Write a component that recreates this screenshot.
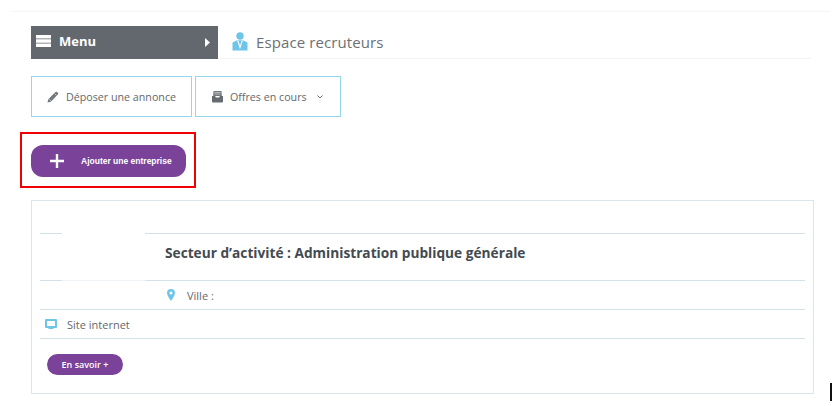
<div class="page">
  <div class="topline"></div>
  <header class="head">
    <div class="menu">
      <svg class="burger" width="15" height="12" viewBox="0 0 15 12"><path d="M0 0h15v3.400H0zM0 4.300h15v3.400H0zM0 8.600h15V12H0z" fill="#fff"/></svg>
      <span class="menu-label">Menu</span>
      <svg class="arrow" width="5" height="9" viewBox="0 0 5 9"><path d="M0 0l5 4.500L0 9z" fill="#fff"/></svg>
    </div>
    <svg class="person" width="16" height="19" viewBox="0 0 16 19">
      <circle cx="8" cy="4" r="3.700" fill="#6fc5e8"/>
      <path d="M0.500 10.500L5 8.300H11L15.500 10.500V18.500H0.500z" fill="#6fc5e8"/>
      <path d="M5.700 8.500L8 15.500L10.300 8.500" fill="none" stroke="#fff" stroke-width="1.100"/>
    </svg>
    <span class="title">Espace recruteurs</span>
  </header>

  <nav class="actions">
    <div class="act first">
      <svg width="12" height="12" viewBox="0 0 12 12"><path d="M0.500 11.500l0.800-3.300L8.400 1.100a1.200 1.200 0 0 1 1.700 0l0.800 0.800a1.200 1.200 0 0 1 0 1.700L3.800 10.700z" fill="#73787c"/><path d="M2.200 8.200l1.600 1.600M7.700 2.600l1.700 1.700" stroke="#fff" stroke-width="0.600"/></svg>
      <span>Déposer une annonce</span>
    </div>
    <div class="act second">
      <svg width="11" height="12" viewBox="0 0 11 12"><path d="M1.500 0h8l0.300 5H1.200z" fill="#73787c"/><path d="M2.500 1.500h6M2.500 3h6" stroke="#d0d3d5" stroke-width="0.700"/><path d="M0 5h3l1 1.500h3L8 5h3v5.500a1 1 0 0 1-1 1H1a1 1 0 0 1-1-1z" fill="#666b70"/></svg>
      <span>Offres en cours</span>
      <svg class="chev" width="6" height="4" viewBox="0 0 6 4"><path d="M0.500 0.500L3 3L5.500 0.500" fill="none" stroke="#666b70" stroke-width="1"/></svg>
    </div>
  </nav>

  <div class="redbox">
    <div class="add">
      <svg width="14" height="14" viewBox="0 0 14 14"><path d="M5.800 0h2.400v5.800H14v2.400H8.200V14H5.800V8.200H0V5.800h5.800z" fill="#fff"/></svg>
      <span>Ajouter une entreprise</span>
    </div>
  </div>

  <section class="card">
    <div class="rule"><i class="logo-gap"></i></div>
    <div class="sector-row"><h2>Secteur d’activité : Administration publique générale</h2></div>
    <div class="rule"><i class="logo-gap faint"></i></div>
    <div class="row ville">
      <svg width="8" height="12" viewBox="0 0 8 12"><path fill-rule="evenodd" d="M4 0a4 4 0 0 1 4 4c0 2.600-4 8-4 8S0 6.600 0 4a4 4 0 0 1 4-4zm0 2.500a1.500 1.500 0 1 0 0 3 1.500 1.500 0 0 0 0-3z" fill="#6fc5e8"/></svg>
      <span>Ville :</span>
    </div>
    <div class="rule"></div>
    <div class="row site">
      <svg width="12" height="11" viewBox="0 0 12 11"><path fill-rule="evenodd" d="M1 0h10a1 1 0 0 1 1 1v7a1 1 0 0 1-1 1H8.500v1H3.500V9H1a1 1 0 0 1-1-1V1a1 1 0 0 1 1-1zm1 2v5h8V2z" fill="#6fc5e8"/></svg>
      <span>Site internet</span>
    </div>
    <div class="rule"></div>
    <div class="more">En savoir +</div>
  </section>

  <div class="cursor"></div>
</div>

<style>
  :global(body) {
    margin: 0;
    background: #fff;
  }
  .page {
    position: relative;
    width: 832px;
    height: 406px;
    overflow: hidden;
    padding-top: 11px;
    box-sizing: border-box;
    font-family: "Open Sans", "Noto Sans", sans-serif;
    color: #55595d;
  }
  .topline {
    height: 1px;
    margin-left: 11px;
    margin-right: 2px;
    background: #f4f5f6;
  }
  .head {
    display: flex;
    align-items: center;
    margin: 14px 21px 0 31px;
    height: 32px;
    border-bottom: 1px solid #f3f4f5;
  }
  .menu {
    display: flex;
    align-items: center;
    width: 187px;
    height: 33px;
    box-sizing: border-box;
    padding: 0 8px 3px 5px;
    background: #62686e;
    color: #fff;
    margin-bottom: -1px;
  }
  .menu-label {
    margin-left: 8px;
    margin-bottom: 1px;
    font-size: 13px;
    font-weight: 700;
    flex: 1;
  }
  .arrow {
    margin-top: 2px;
  }
  .person {
    margin-left: 14px;
    margin-bottom: 2px;
  }
  .title {
    margin-left: 8px;
    font-size: 15px;
    color: #6b7075;
    letter-spacing: 0.1px;
  }
  .actions {
    display: flex;
    gap: 4px;
    margin: 17px 0 0 31px;
  }
  .act {
    display: flex;
    align-items: center;
    height: 41px;
    box-sizing: border-box;
    border: 1px solid #94d8ee;
    font-size: 10.7px;
    color: #64686c;
  }
  .first {
    width: 161px;
    padding-left: 15px;
    gap: 7px;
  }
  .second {
    width: 146px;
    padding-left: 16px;
    gap: 7px;
  }
  .chev {
    margin-left: 3px;
  }
  .actions .second {
    margin-left: -1px;
  }
  .redbox {
    width: 176px;
    height: 56px;
    margin: 15px 0 0 20px;
    box-sizing: border-box;
    border: 2px solid #f00000;
    padding: 11px 0 0 9px;
  }
  .add {
    display: flex;
    align-items: center;
    width: 155px;
    height: 32px;
    box-sizing: border-box;
    padding-left: 19px;
    gap: 17px;
    background: #7a4399;
    border-radius: 12px;
    color: #fff;
    font-family: "Liberation Sans", Arial, sans-serif;
    font-size: 8.500px;
    font-weight: 700;
    white-space: nowrap;
  }
  .card {
    margin: 12px 0 0 31px;
    width: 783px;
    height: 194px;
    box-sizing: border-box;
    border: 1px solid #d9e7ec;
    padding: 32px 8px 0;
  }
  .rule {
    position: relative;
    height: 1px;
    background: #d3e2e8;
  }
  .logo-gap {
    position: absolute;
    left: 22px;
    top: 0;
    width: 83px;
    height: 1px;
    background: #fff;
  }
  .logo-gap.faint {
    background: #f0f4f6;
  }
  .sector-row {
    display: flex;
    align-items: center;
    height: 46px;
    padding-left: 125px;
    padding-bottom: 10px;
    box-sizing: border-box;
  }
  h2 {
    margin: 0;
    font-size: 13.700px;
    font-weight: 700;
    color: #434a50;
    white-space: nowrap;
  }
  .row {
    display: flex;
    align-items: center;
    height: 28px;
    font-size: 11px;
    color: #64686c;
  }
  .ville {
    padding-left: 127px;
    gap: 12px;
  }
  .site {
    padding-left: 5px;
    gap: 10px;
  }
  .more {
    display: flex;
    align-items: center;
    justify-content: center;
    width: 76px;
    height: 21px;
    margin: 15px 0 0 7px;
    background: #7a4399;
    border-radius: 11px;
    color: #fff;
    font-size: 9px;
    font-weight: 600;
  }
  .cursor {
    position: absolute;
    left: 830px;
    top: 383px;
    width: 2px;
    height: 18px;
    background: #111;
  }
</style>
